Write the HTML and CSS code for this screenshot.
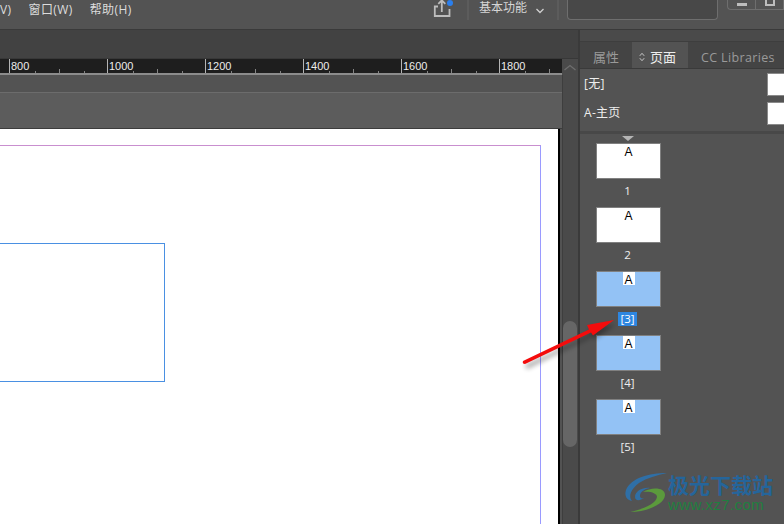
FILE: index.html
```
<!DOCTYPE html>
<html lang="zh">
<head>
<meta charset="utf-8">
<title>InDesign 页面</title>
<link rel="stylesheet" href="styles.css">
</head>
<body>
<div class="app">
  <header class="menubar">
    <nav class="menus">
      <span class="menu menu-cut">V)</span>
      <span class="menu">窗口(W)</span>
      <span class="menu">帮助(H)</span>
    </nav>
    <div class="tools">
      <span class="share">
        <svg width="20" height="20" viewBox="0 0 20 20"><path d="M6 6.500H2.800V16H17.500V9M9.800 12V1M6.300 3.800L9.800 .3L13.300 3.800" fill="none" stroke="#bdbdbd" stroke-width="1.800"/></svg>
        <i class="dot"></i>
      </span>
      <span class="vsep"></span>
      <span class="workspace">基本功能</span>
      <svg class="chev" width="10" height="6" viewBox="0 0 10 6"><path d="M1.500 1L5 4.500L8.500 1" fill="none" stroke="#d0d0d0" stroke-width="1.300"/></svg>
      <span class="vsep vsep-2"></span>
      <span class="search"></span>
      <span class="winbtns"><span class="winbtn"><i class="min"></i></span><span class="winbtn"><i class="max"></i></span></span>
    </div>
  </header>
  <div class="body">
    <main class="work">
      <div class="strip"></div>
      <div class="rulerrow">
        <div class="ruler">
          <div class="rmaj">800<i class="t1"></i><i class="t2"></i><i class="t3"></i></div>
          <div class="rmaj">1000<i class="t1"></i><i class="t2"></i><i class="t3"></i></div>
          <div class="rmaj">1200<i class="t1"></i><i class="t2"></i><i class="t3"></i></div>
          <div class="rmaj">1400<i class="t1"></i><i class="t2"></i><i class="t3"></i></div>
          <div class="rmaj">1600<i class="t1"></i><i class="t2"></i><i class="t3"></i></div>
          <div class="rmaj">1800<i class="t1"></i><i class="t2"></i><i class="t3"></i></div>
        </div>
        <div class="scrollhead"><svg width="14" height="7" viewBox="0 0 14 7"><path d="M1.500 6L7 1.500L12.500 6" fill="none" stroke="#6e6e6e" stroke-width="1.300"/></svg></div>
      </div>
      <div class="docrow">
        <div class="docarea">
          <div class="tabbar"></div>
          <div class="pastebar"></div>
          <div class="page">
            <div class="margin"></div>
            <div class="frame"></div>
          </div>
        </div>
        <div class="scrolltrack"><div class="thumb"></div></div>
      </div>
    </main>
    <aside class="panel">
      <div class="panelstrip"></div>
      <div class="tabs">
        <span class="tab">属性</span>
        <span class="tab tab-on"><svg class="updown" width="6" height="10" viewBox="0 0 6 10"><path d="M.8 3.800L3 1.300L5.200 3.800M.8 6.200L3 8.700L5.200 6.200" fill="none" stroke="#c8c8c8" stroke-width="1"/></svg>页面</span>
        <span class="tab tab-cc">CC Libraries</span>
      </div>
      <div class="masters">
        <div class="master"><span>[无]</span><i class="mthumb"></i></div>
        <div class="master"><span>A-主页</span><i class="mthumb"></i></div>
      </div>
      <div class="pages">
        <i class="marker"></i>
        <div class="pg"><div class="sheet"><b class="a">A</b></div><span class="num">1</span></div>
        <div class="pg"><div class="sheet"><b class="a">A</b></div><span class="num">2</span></div>
        <div class="pg"><div class="sheet sheet-sel"><b class="a">A</b></div><span class="num num-on">[3]</span></div>
        <div class="pg"><div class="sheet sheet-sel"><b class="a">A</b></div><span class="num">[4]</span></div>
        <div class="pg"><div class="sheet sheet-sel"><b class="a">A</b></div><span class="num">[5]</span></div>
      </div>
    </aside>
  </div>
  <svg class="arrow" width="110" height="60" viewBox="0 0 110 60">
    <defs><filter id="sh" x="-20%" y="-40%" width="140%" height="200%"><feGaussianBlur stdDeviation="2.500"/></filter></defs>
    <path d="M1 43L67 12L65 7L92 2L71 17L69 14L3 47Z" fill="#000" opacity=".35" filter="url(#sh)" transform="translate(2 4)"/>
    <path d="M1 43L67 11.500L65 7L92 2L71 17.500L69 14.500L3 46Q0 46 1 43Z" fill="#f40c0c"/>
  </svg>
  <div class="mark">
    <svg class="marklogo" width="46" height="42" viewBox="0 0 46 42">
      <path d="M44 1C26 1 8 6 3 18C1 24 4 28 9 29C5 24 8 17 16 11C24 6 34 3 44 1Z" fill="#2f6fa6"/>
      <path d="M12 25C12 19 20 15 27 16C21 17 17 20 17 24C17 26 19 27 21 26C17 29 12 29 12 25Z" fill="#2f6fa6"/>
      <path d="M20 20C28 15 42 15 42 23C42 32 24 40 7 40C20 37 33 32 34 25C34 21 27 19 20 20Z" fill="#5b9a3c"/>
    </svg>
    <div class="marktext"><span class="markcn">极光下载站</span><span class="markurl">www.xz7.com</span></div>
  </div>
</div>
</body>
</html>
```
FILE: styles.css
```
* { box-sizing: border-box; }
html, body { margin: 0; padding: 0; }
body { width: 784px; height: 524px; overflow: hidden; background: #535353; font-family: "Open Sans", "Noto Sans CJK SC", sans-serif; color: #e2e2e2; }
.app { position: relative; width: 784px; height: 524px; display: flex; flex-direction: column; overflow: hidden; }

.menubar { height: 30px; flex: none; display: flex; justify-content: space-between; background: #535353; border-bottom: 1px solid #3a3a3a; }
.menus { display: flex; gap: 17px; font-size: 12px; letter-spacing: .4px; line-height: 19px; color: #dcdcdc; }
.tools { display: flex; align-items: flex-start; }
.share { position: relative; width: 20px; height: 20px; margin-right: 15px; }
.share svg { display: block; }
.dot { position: absolute; left: 15px; top: 0; width: 6px; height: 6px; border-radius: 50%; background: #2a7fee; }
.vsep { width: 2px; height: 20px; background: #5c5c5c; margin-right: 10px; }
.workspace { font-size: 12px; line-height: 16px; margin-right: 8px; color: #d6d6d6; }
.chev { margin-top: 8px; margin-right: 12px; }
.vsep-2 { margin-right: 8px; }
.search { width: 151px; height: 20px; border: 1px solid #6e6e6e; border-top: 0; border-radius: 0 0 4px 4px; background: #484848; margin-right: 9px; }
.winbtns { display: flex; width: 57px; height: 10px; border: 1px solid #6e6e6e; border-top: 0; border-right: 0; border-radius: 0 0 0 4px; }
.winbtn { width: 28px; height: 9px; border-right: 1px solid #6e6e6e; display: flex; justify-content: center; }
.min { width: 10px; height: 3px; margin-top: 3px; background: #bdbdbd; }
.max { width: 10px; height: 6px; border: 2px solid #bdbdbd; border-top: 0; }

.body { flex: 1; display: flex; min-height: 0; }
.work { width: 578px; flex: none; display: flex; flex-direction: column; min-height: 0; }
.strip { height: 29px; flex: none; background: #424242; border-bottom: 1px solid #383838; }
.rulerrow { display: flex; height: 16px; flex: none; }
.ruler { width: 562px; flex: none; display: flex; padding-left: 9px; overflow: hidden; background: #1e1e1e; border-bottom: 2px solid #8c8c8c; }
.rmaj { position: relative; width: 98px; flex: none; border-left: 1px solid #b4b4b4; padding-left: 1px; font-family: "Liberation Sans", sans-serif; font-size: 11px; line-height: 14px; color: #ececec; }
.rmaj i { position: absolute; bottom: 0; width: 1px; background: #858585; }
.t1 { left: 25px; height: 2px; }
.t2 { left: 49px; height: 4px; }
.t3 { left: 74px; height: 2px; }
.scrollhead { flex: 1; background: #4a4a4a; text-align: center; line-height: 0; padding-top: 5px; }
.scrollhead svg { display: inline-block; }

.docrow { flex: 1; display: flex; min-height: 0; }
.docarea { width: 562px; flex: none; display: flex; flex-direction: column; background: #535353; min-height: 0; }
.tabbar { height: 18px; flex: none; background: #535353; border-bottom: 1px solid #6c6c6c; }
.pastebar { height: 36px; flex: none; background: #5c5c5c; border-bottom: 1px solid #3c3c3c; }
.page { position: relative; flex: 1; background: #fff; width: 560px; border-right: 2px solid #000; margin-right: 2px; }
.margin { position: absolute; left: -1px; top: 16px; width: 542px; height: 420px; border-top: 1px solid #c98fcf; border-right: 1px solid #9a9aff; }
.frame { position: absolute; left: -1px; top: 114px; width: 166px; height: 139px; border: 1px solid #4a90e2; border-left: 0; }
.scrolltrack { flex: 1; position: relative; background: #4a4a4a; border-left: 1px solid #3e3e3e; }

.thumb { position: absolute; left: 0; top: 246px; width: 14px; height: 126px; border-radius: 7px; background: #666; }

.panel { flex: 1; display: flex; flex-direction: column; background: #535353; border-left: 2px solid #3a3a3a; min-width: 0; }
.panelstrip { height: 12px; flex: none; background: #4a4a4a; border-bottom: 1px solid #3e3e3e; }
.tabs { height: 27px; flex: none; display: flex; background: #444; border-bottom: 1px solid #3a3a3a; font-size: 13px; line-height: 31px; color: #9a9a9a; white-space: nowrap; overflow: hidden; }
.tab { padding: 0 13px 0 13px; }
.tab-on { display: flex; align-items: center; width: 56px; padding: 3px 0 0 7px; margin-bottom: -1px; background: #535353; color: #eee; }
.updown { margin-right: 5px; flex: none; }
.tab-cc { padding-left: 13px; padding-right: 0; font-size: 12.500px; letter-spacing: .35px; }
.masters { height: 65px; flex: none; padding-top: 4px; border-bottom: 3px solid #484848; }
.master { height: 29px; display: flex; justify-content: space-between; padding: 0 0 0 4px; font-size: 12px; letter-spacing: .3px; line-height: 22px; color: #eee; }
.mthumb { width: 17px; height: 23px; background: #fff; border: 1px solid #8a8a8a; border-right: 0; }
.pages { position: relative; padding: 9px 0 0 16px; }
.marker { position: absolute; left: 42px; top: 2px; border: 6px solid transparent; border-top: 5px solid #b4b4b4; border-bottom: 0; }
.pg { width: 65px; height: 64px; display: flex; flex-direction: column; align-items: center; }
.sheet { width: 65px; height: 36px; background: #fff; border: 1px solid #808080; display: flex; justify-content: center; }
.sheet-sel { background: #93c2f5; }
.a { width: 12px; height: 13px; padding-top: 2px; background: #fff; font: 400 12px/12px "Liberation Sans", sans-serif; color: #000; text-align: center; }
.num { margin-top: 5px; padding: 0 2px; font-size: 11.500px; line-height: 14px; color: #eee; margin-left: -2px; }
.num-on { background: #2d86e0; color: #fff; }

.arrow { position: absolute; left: 522px; top: 318px; }
.mark { position: absolute; left: 623px; top: 472px; display: flex; }
.marktext { display: flex; flex-direction: column; margin-left: -1px; }
.markcn { font: 700 21px/24px "Noto Sans CJK SC", sans-serif; color: #25659b; white-space: nowrap; }
.markurl { font: 400 15px/18px "Liberation Sans", sans-serif; color: #1f7f3f; letter-spacing: .400px; white-space: nowrap; }
```
